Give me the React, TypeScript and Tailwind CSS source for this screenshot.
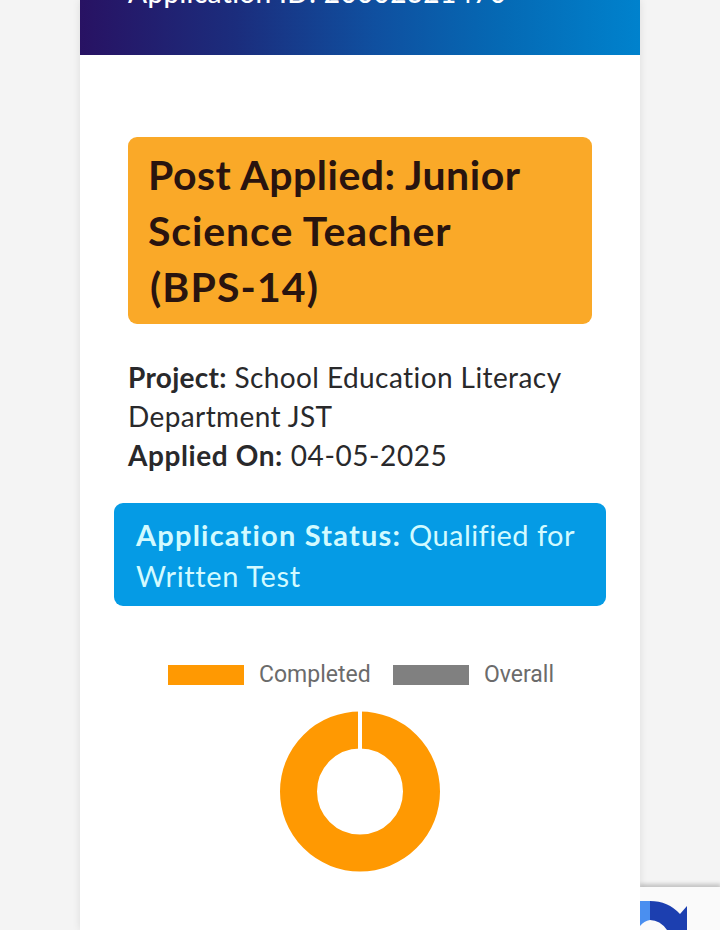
export default function App() {
  return (
    <div className="relative flex h-[930px] w-[720px] justify-center overflow-hidden bg-[#f4f4f4] font-['Lato','Open_Sans',sans-serif]">
      <main className="flex h-full w-[560px] flex-col bg-white shadow-[0_0_8px_rgba(0,0,0,0.1)]">
        <header className="flex h-[55px] shrink-0 items-start overflow-hidden bg-[linear-gradient(90deg,#281263_0%,#1b2d7d_28%,#0f50a0_53%,#0569b4_75%,#0082cd_100%)] px-12">
          <h1 className="-mt-[26px] whitespace-nowrap text-[28px] font-medium leading-[36px] tracking-[0.35px] text-white">
            Application ID: 20002321470
          </h1>
        </header>

        <h2 className="mx-12 mt-[82px] h-[187px] shrink-0 rounded-[9px] bg-[#faa928] px-[20px] pt-[10px] text-[41px] font-bold leading-[56px] text-[#29140f]">
          <span className="block whitespace-nowrap tracking-[0.5px]">Post Applied: Junior</span>
          <span className="block whitespace-nowrap tracking-[0.9px]">Science Teacher</span>
          <span className="block whitespace-nowrap pl-[2px] tracking-[1.1px]">(BPS-14)</span>
        </h2>

        <section className="mx-12 mt-[34px] text-[28px] leading-[39px] text-[#29292b]">
          <p className="whitespace-nowrap tracking-[0.42px]">
            <strong className="tracking-[0.3px]">Project:</strong> School Education Literacy
          </p>
          <p className="whitespace-nowrap tracking-[0.4px]">Department JST</p>
          <p className="whitespace-nowrap tracking-[0.6px]">
            <strong>Applied On:</strong> 04-05-2025
          </p>
        </section>

        <section className="mx-[34px] mt-[28px] h-[103px] shrink-0 rounded-[9px] bg-[#059be5] px-[22px] pt-[11px] text-[29px] leading-[41px] text-[#d2faff]">
          <p className="whitespace-nowrap tracking-[0.45px]">
            <strong className="tracking-[1.2px]">Application Status:</strong> Qualified for
          </p>
          <p className="whitespace-nowrap tracking-[0.65px]">Written Test</p>
        </section>

        <div className="mt-[55px] flex h-[28px] shrink-0 items-center pl-[88px] font-['Roboto',sans-serif] text-[23px] text-[#6b6b6b]">
          <span className="h-[20px] w-[76px] bg-[#ff9902]" />
          <span className="ml-[15px] w-[134px] whitespace-nowrap">Completed</span>
          <span className="h-[20px] w-[76px] bg-[#808080]" />
          <span className="ml-[15px] whitespace-nowrap">Overall</span>
        </div>

        <svg className="mx-auto mt-[22px] shrink-0" width="162" height="162" viewBox="0 0 162 162">
          <circle cx="81" cy="80.5" r="61.5" fill="none" stroke="#ff9902" strokeWidth="37" />
          <rect x="79" y="0" width="4" height="44" fill="#fff" />
        </svg>
      </main>

      <aside className="absolute bottom-0 right-0 h-[43px] w-[80px] overflow-hidden bg-[#fafafa] shadow-[0_-2px_4px_1px_rgba(0,0,0,0.2)] [clip-path:inset(-10px_0_0_0)]">
        <svg width="80" height="43" viewBox="0 0 80 43">
          <path d="M0 14h10v19Q4 34 0 39Z" fill="#4a8ff0" />
          <path d="M10 14Q28 14 40 27L47 19V43H27Q20 33 10 33Z" fill="#1c3fb0" />
        </svg>
      </aside>
    </div>
  );
}
